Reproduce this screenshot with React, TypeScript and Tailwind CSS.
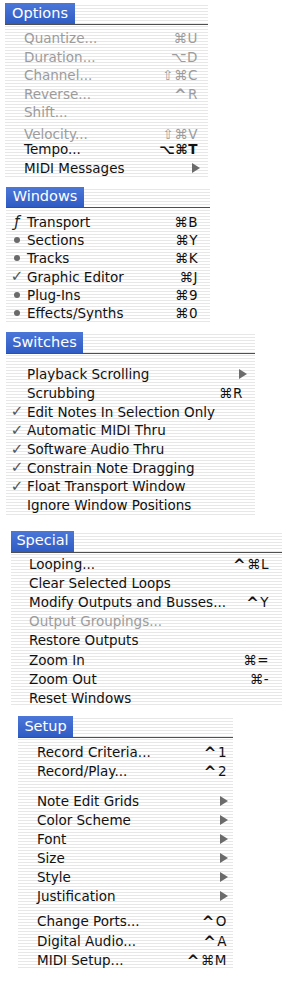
import React from "react";

type Item = {
  label: string;
  keys?: string;
  mark?: "check" | "dot" | "f";
  sub?: boolean;
  off?: boolean;
  strong?: boolean;
  low?: boolean; // ligne décalée vers le bas (Velocity)
  gap?: string; // classe de marge au-dessus (séparateur)
  h?: string;
};

type MenuProps = {
  title: string;
  box: string; // marges + largeur du menu
  tab: string; // largeur + hauteur de l'onglet
  list: string; // padding de la liste
  row: string; // hauteur de ligne par défaut
  pad: string; // padding droit de la ligne
  lead: string; // largeur de la colonne des marques
  arrow: string; // décalage de la flèche de sous-menu
  items: Item[];
};

const stripes =
  "bg-[repeating-linear-gradient(to_bottom,#ffffff_0px,#ffffff_2px,#e7e7e7_2px,#e7e7e7_3px)]";

function Mark({ mark }: { mark?: Item["mark"] }) {
  if (mark === "dot") return <span className="block w-[6px] h-[6px] rounded-full bg-[#6a6a6a]" />;
  if (mark === "check") return <span className="text-[15px] leading-none font-bold text-[#555]">✓</span>;
  if (mark === "f") return <span className="text-[15px] leading-none italic text-[#222]">ƒ</span>;
  return null;
}

function Arrow() {
  return (
    <svg width="8" height="10" viewBox="0 0 8 10" className="block">
      <polygon points="0,0 8,5 0,10" fill="#6b6b6b" />
    </svg>
  );
}

// le symbole Contrôle est un ^ gras dans l'original
function Keys({ keys }: { keys: string }) {
  return (
    <>
      {keys.split("").map((c, i) =>
        c === "^" ? (
          <span key={i} className="font-bold text-[15px] leading-none relative top-[1px] mr-[1px]">
            ^
          </span>
        ) : (
          <span key={i}>{c}</span>
        )
      )}
    </>
  );
}

function Menu({ title, box, tab, list, row, pad, lead, arrow, items }: MenuProps) {
  return (
    <div className={`${box} ${stripes}`}>
      <div className="border-b border-[#4f4f4f]">
        <div
          className={`${tab} flex items-center justify-center bg-gradient-to-b from-[#4c77d9] to-[#2f5cc4] text-white text-[14.5px]`}
        >
          {title}
        </div>
      </div>
      <div className={list}>
        {items.map((it, i) => (
          <div
            key={i}
            className={`flex items-center ${it.h ?? row} ${pad} ${it.gap ?? ""} ${
              it.off ? "text-[#9c9c9c]" : "text-[#111]"
            }`}
          >
            <span className={`${lead} shrink-0 flex items-center justify-center pl-[1px]`}>
              <Mark mark={it.mark} />
            </span>
            <span className={`whitespace-nowrap ${it.low ? "translate-y-[3px]" : ""}`}>{it.label}</span>
            {it.keys && (
              <span
                className={`ml-auto whitespace-nowrap tracking-[0.5px] ${it.strong ? "font-bold" : ""} ${
                  it.low ? "translate-y-[3px]" : ""
                }`}
              >
                <Keys keys={it.keys} />
              </span>
            )}
            {it.sub && (
              <span className={`ml-auto ${arrow}`}>
                <Arrow />
              </span>
            )}
          </div>
        ))}
      </div>
    </div>
  );
}

export default function App() {
  return (
    <div className="w-[286px] h-[982px] bg-white overflow-hidden flex flex-col text-[13.5px] font-['DejaVu_Sans',sans-serif]">
      <Menu
        title="Options"
        box="mt-[3px] ml-[5px] w-[203px]"
        tab="w-[70px] h-[21px]"
        list="pt-[4px] pb-[1px]"
        row="h-[18.5px]"
        pad="pr-[10px]"
        lead="w-[19px]"
        arrow="-mr-[2px]"
        items={[
          { label: "Quantize...", keys: "⌘U", off: true },
          { label: "Duration...", keys: "⌥D", off: true },
          { label: "Channel...", keys: "⇧⌘C", off: true },
          { label: "Reverse...", keys: "^R", off: true },
          { label: "Shift...", off: true },
          { label: "Velocity...", keys: "⇧⌘V", off: true, low: true },
          { label: "Tempo...", keys: "⌥⌘T", strong: true },
          { label: "MIDI Messages", sub: true },
        ]}
      />
      <Menu
        title="Windows"
        box="mt-[9px] ml-[6px] w-[204px]"
        tab="w-[78px] h-[20px]"
        list="pt-[5px]"
        row="h-[18.2px]"
        pad="pr-[12px]"
        lead="w-[21px]"
        arrow=""
        items={[
          { label: "Transport", keys: "⌘B", mark: "f" },
          { label: "Sections", keys: "⌘Y", mark: "dot" },
          { label: "Tracks", keys: "⌘K", mark: "dot" },
          { label: "Graphic Editor", keys: "⌘J", mark: "check" },
          { label: "Plug-Ins", keys: "⌘9", mark: "dot" },
          { label: "Effects/Synths", keys: "⌘0", mark: "dot" },
        ]}
      />
      <Menu
        title="Switches"
        box="mt-[10px] ml-[6px] w-[249px]"
        tab="w-[77px] h-[21px]"
        list="pt-[11px]"
        row="h-[18.7px]"
        pad="pr-[12px]"
        lead="w-[21px]"
        arrow="-mr-[4px]"
        items={[
          { label: "Playback Scrolling", sub: true },
          { label: "Scrubbing", keys: "⌘R" },
          { label: "Edit Notes In Selection Only", mark: "check" },
          { label: "Automatic MIDI Thru", mark: "check" },
          { label: "Software Audio Thru", mark: "check" },
          { label: "Constrain Note Dragging", mark: "check" },
          { label: "Float Transport Window", mark: "check" },
          { label: "Ignore Window Positions" },
        ]}
      />
      <Menu
        title="Special"
        box="mt-[16px] ml-[11px] w-[271px]"
        tab="w-[63px] h-[21px]"
        list="pt-[2px]"
        row="h-[19.1px]"
        pad="pr-[13px]"
        lead="w-[18px]"
        arrow=""
        items={[
          { label: "Looping...", keys: "^⌘L" },
          { label: "Clear Selected Loops" },
          { label: "Modify Outputs and Busses...", keys: "^Y" },
          { label: "Output Groupings...", off: true },
          { label: "Restore Outputs" },
          { label: "Zoom In", keys: "⌘=" },
          { label: "Zoom Out", keys: "⌘-" },
          { label: "Reset Windows" },
        ]}
      />
      <Menu
        title="Setup"
        box="mt-[9px] ml-[18px] w-[215px]"
        tab="w-[55px] h-[21px]"
        list="pt-[4px]"
        row="h-[19px]"
        pad="pr-[6px]"
        lead="w-[19px]"
        arrow="-mr-[1px]"
        items={[
          { label: "Record Criteria...", keys: "^1" },
          { label: "Record/Play...", keys: "^2" },
          { label: "Note Edit Grids", sub: true, gap: "mt-[11px]" },
          { label: "Color Scheme", sub: true },
          { label: "Font", sub: true },
          { label: "Size", sub: true },
          { label: "Style", sub: true },
          { label: "Justification", sub: true },
          { label: "Change Ports...", keys: "^O", gap: "mt-[6px]", h: "h-[19.5px]" },
          { label: "Digital Audio...", keys: "^A", h: "h-[19.5px]" },
          { label: "MIDI Setup...", keys: "^⌘M", h: "h-[19.5px]" },
        ]}
      />
    </div>
  );
}
